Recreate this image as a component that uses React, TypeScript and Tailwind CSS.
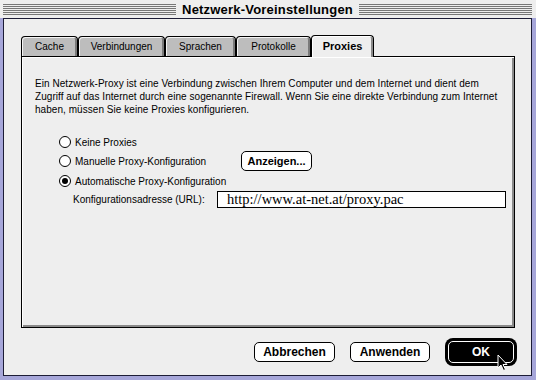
import React from "react";

const tabs = [
  { label: "Cache", w: "w-[57px]" },
  { label: "Verbindungen", w: "w-[87px]" },
  { label: "Sprachen", w: "w-[71px]" },
  { label: "Protokolle", w: "w-[75px]" },
];

function Stripes({ className }: { className: string }) {
  return (
    <div
      className={`h-[12px] bg-[repeating-linear-gradient(to_bottom,#777_0px,#777_1px,#eeeeee_1px,#eeeeee_2px)] ${className}`}
    />
  );
}

function Radio({ checked }: { checked?: boolean }) {
  return (
    <span className="flex h-[12px] w-[12px] shrink-0 items-center justify-center rounded-full border border-black bg-white">
      {checked && <span className="h-[6px] w-[6px] rounded-full bg-black" />}
    </span>
  );
}

function MacButton({ label, w }: { label: string; w: string }) {
  return (
    <button
      className={`flex h-[20px] ${w} items-center justify-center rounded-[5px] border border-black bg-white text-[12px] font-bold text-black`}
    >
      {label}
    </button>
  );
}

export default function App() {
  return (
    <div className="flex h-[380px] w-[536px] flex-col bg-[#a6a6d9] pl-[3px] pr-[4px] pb-[4px] font-['Liberation_Sans',sans-serif] text-black">
      {/* Title bar */}
      <div className="-ml-[3px] -mr-[4px] flex h-[18px] items-center bg-[#eeeeee] pl-[3px] pr-[4px] pt-[1px]">
        <Stripes className="flex-1" />
        <span className="px-[6px] text-[13px] font-bold leading-none tracking-[0.2px]">
          Netzwerk-Voreinstellungen
        </span>
        <Stripes className="flex-1" />
      </div>

      {/* Body */}
      <div className="flex flex-1 flex-col border border-[#1c1c36] bg-[#eeeeee] pl-[17px] pr-[16px] pt-[16px]">
        {/* Tabs */}
        <div className="flex items-end">
          {tabs.map((t) => (
            <div
              key={t.label}
              className={`flex h-[20px] ${t.w} items-center justify-center rounded-t-[4px] border border-b-0 border-black bg-[#bdbdbd] text-[10px] shadow-[inset_1px_1px_0_#f4f4f4,inset_-2px_0_0_#7a7a7a]`}
            >
              {t.label}
            </div>
          ))}
          <div className="relative -mb-px flex h-[22px] w-[63px] items-center justify-center rounded-t-[4px] border border-b-0 border-black bg-[#eeeeee] text-[11px] font-bold shadow-[inset_1px_1px_0_#ffffff,inset_-2px_0_0_#8a8a8a]">
            Proxies
          </div>
        </div>

        {/* Panel */}
        <div className="flex h-[272px] flex-col border border-black bg-[#eeeeee] pl-[13px] pt-[20px] text-[10px] shadow-[inset_1px_1px_0_#ffffff,inset_-2px_-2px_0_#8a8a8a]">
          <p className="w-[470px] leading-[13px] tracking-[0.05px]">
            Ein Netzwerk-Proxy ist eine Verbindung zwischen Ihrem Computer und dem Internet und dient dem
            Zugriff auf das Internet durch eine sogenannte Firewall. Wenn Sie eine direkte Verbindung zum Internet
            haben, müssen Sie keine Proxies konfigurieren.
          </p>

          <div className="mt-[18px] flex flex-col pl-[24px]">
            <div className="flex h-[16px] items-center gap-[4px]">
              <Radio />
              <span>Keine Proxies</span>
            </div>
            <div className="mt-[1px] flex h-[20px] items-center gap-[4px]">
              <Radio />
              <span className="w-[162px]">Manuelle Proxy-Konfiguration</span>
              <button className="flex h-[20px] w-[71px] items-center justify-center rounded-[5px] border border-black bg-white text-[11px] font-bold">
                Anzeigen...
              </button>
            </div>
            <div className="mt-[2px] flex h-[16px] items-center gap-[4px]">
              <Radio checked />
              <span>Automatische Proxy-Konfiguration</span>
            </div>
            <div className="mt-[2px] flex h-[17px] items-center">
              <span className="w-[158px] whitespace-nowrap pl-[14px]">Konfigurationsadresse (URL):</span>
              <div className="flex h-[17px] w-[289px] items-center border border-black bg-white pl-[9px] font-['Liberation_Serif',serif] text-[14.5px] leading-none">
                http://www.at-net.at/proxy.pac
              </div>
            </div>
          </div>
        </div>

        {/* Buttons */}
        <div className="mt-[10px] flex items-center justify-end gap-[15px]">
          <MacButton label="Abbrechen" w="w-[81px]" />
          <MacButton label="Anwenden" w="w-[80px]" />
          <div className="relative -mr-[2px] rounded-[8px] bg-black p-[3px]">
            <div className="flex h-[22px] w-[66px] items-center justify-center rounded-[5px] border border-white bg-black text-[12px] font-bold text-white">
              OK
            </div>
            <svg
              className="absolute left-[52px] top-[16px]"
              width="12"
              height="18"
              viewBox="0 0 12 18"
            >
              <path
                d="M1 1 L1 14 L4 11 L6.5 16.5 L8.5 15.5 L6 10.5 L10 10.5 Z"
                fill="black"
                stroke="white"
                strokeWidth="1"
              />
            </svg>
          </div>
        </div>
      </div>
    </div>
  );
}
